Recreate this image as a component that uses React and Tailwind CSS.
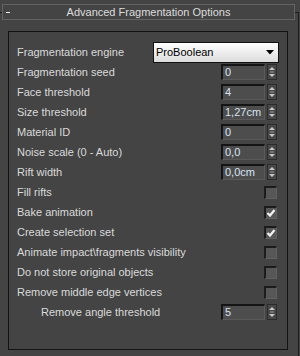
import React from "react";

const font = { fontFamily: '"Liberation Sans", Arial, sans-serif' };

function Spinner({ value }) {
  return (
    <div className="flex items-center gap-[2px]">
      <div className="w-[44px] h-[16px] border-t-2 border-l-2 border-[#141414] border-r border-b border-r-[#5a5a5a] border-b-[#5a5a5a] bg-[#4d4d4d] flex items-center pl-[2px] text-[11px] text-[#d6e2f2] leading-none">
        {value}
      </div>
      <div className="w-[10px] h-[16px] border border-[#2c2c2c] bg-[#474747]">
        <svg width="8" height="14" viewBox="0 0 8 14" className="block">
          <polygon points="4,2 7,5 1,5" fill="#c8c8c8" />
          <rect x="2" y="6.5" width="4" height="1" fill="#9a9a9a" />
          <polygon points="1,9 7,9 4,12" fill="#c8c8c8" />
        </svg>
      </div>
    </div>
  );
}

function Check({ checked }) {
  return (
    <div className="w-[13px] h-[13px] border-t-2 border-l-2 border-[#1c1c1c] border-r border-b border-r-[#606060] border-b-[#606060] bg-[#575757]">
      {checked && (
        <svg width="10" height="10" viewBox="0 0 10 10" className="block">
          <path d="M1.5 5 L4 7.5 L8.5 2" stroke="#f2f2f2" strokeWidth="2.2" fill="none" />
        </svg>
      )}
    </div>
  );
}

function Row({ label, children, indent }) {
  return (
    <div className="h-[20px] flex items-center justify-between pl-[8px] pr-[10px]">
      <span className={"text-[11px] text-[#dadada] whitespace-nowrap " + (indent ? "pl-[24px]" : "")}>{label}</span>
      {children}
    </div>
  );
}

export default function App() {
  return (
    <div className="w-[300px] h-[356px] bg-[#444444] overflow-hidden pt-[12px]" style={font}>
      <div className="ml-[-1px] w-[300px] h-[344px] border-t border-r border-[#1e1e1e]">
        <div className="mt-[-9px] ml-[3px] w-[293px] h-[16px] border border-[#646464] bg-[#444444] flex items-center relative">
          <div className="ml-[3px] w-[4px] h-[1px] bg-[#f0f0f0]"></div>
          <div className="flex-1 text-center text-[11px] text-[#dcdcdc] leading-none pr-[7px]">Advanced Fragmentation Options</div>
        </div>
        <div className="mt-[11px] ml-[9px] w-[280px] h-[319px] border border-[#141414] pt-[10px]">
          <Row label="Fragmentation engine">
            <div className="mr-[-2px] w-[126px] h-[21px] border border-[#111] bg-gradient-to-b from-[#ffffff] to-[#dcdcdc] flex items-center justify-between pl-[2px] pr-[4px]">
              <span className="text-[11px] text-black leading-none">ProBoolean</span>
              <svg width="8" height="5" viewBox="0 0 8 5"><polygon points="0,0 8,0 4,4.5" fill="#000" /></svg>
            </div>
          </Row>
          <Row label="Fragmentation seed"><Spinner value="0" /></Row>
          <Row label="Face threshold"><Spinner value="4" /></Row>
          <Row label="Size threshold"><Spinner value="1,27cm" /></Row>
          <Row label="Material ID"><Spinner value="0" /></Row>
          <Row label="Noise scale (0 - Auto)"><Spinner value="0,0" /></Row>
          <Row label="Rift width"><Spinner value="0,0cm" /></Row>
          <Row label="Fill rifts"><Check /></Row>
          <Row label="Bake animation"><Check checked /></Row>
          <Row label="Create selection set"><Check checked /></Row>
          <Row label="Animate impact\fragments visibility"><Check /></Row>
          <Row label="Do not store original objects"><Check /></Row>
          <Row label="Remove middle edge vertices"><Check /></Row>
          <Row label="Remove angle threshold" indent><Spinner value="5" /></Row>
        </div>
      </div>
    </div>
  );
}
